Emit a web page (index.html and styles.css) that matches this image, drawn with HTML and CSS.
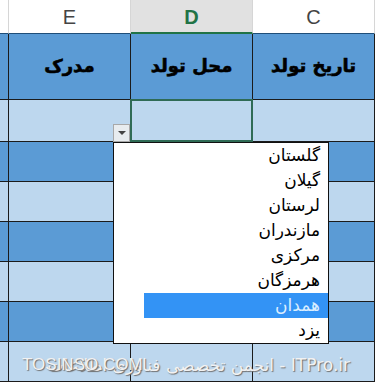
FILE: index.html
```html
<!DOCTYPE html>
<html lang="fa">
<head>
<meta charset="utf-8">
<link rel="stylesheet" href="styles.css">
</head>
<body>
<div class="sheet">
  <div class="row letters">
    <div class="cell"></div>
    <div class="cell">E</div>
    <div class="cell sel-col">D</div>
    <div class="cell">C</div>
  </div>
  <div class="row head">
    <div class="cell"></div>
    <div class="cell" dir="rtl">مدرک</div>
    <div class="cell" dir="rtl">محل تولد</div>
    <div class="cell" dir="rtl">تاریخ تولد</div>
  </div>
  <div class="row light first">
    <div class="cell"></div>
    <div class="cell"></div>
    <div class="cell active"></div>
    <div class="cell"></div>
  </div>
  <div class="row dark"><div class="cell"></div><div class="cell"></div><div class="cell"></div><div class="cell"></div></div>
  <div class="row light"><div class="cell"></div><div class="cell"></div><div class="cell"></div><div class="cell"></div></div>
  <div class="row dark"><div class="cell"></div><div class="cell"></div><div class="cell"></div><div class="cell"></div></div>
  <div class="row light"><div class="cell"></div><div class="cell"></div><div class="cell"></div><div class="cell"></div></div>
  <div class="row dark"><div class="cell"></div><div class="cell"></div><div class="cell"></div><div class="cell"></div></div>
  <div class="row light"><div class="cell"></div><div class="cell"></div><div class="cell"></div><div class="cell"></div></div>

  <div class="arrow-btn"><span class="tri"></span></div>

  <ul class="dropdown" dir="rtl">
    <li>گلستان</li>
    <li>گیلان</li>
    <li>لرستان</li>
    <li>مازندران</li>
    <li>مرکزی</li>
    <li>هرمزگان</li>
    <li class="hl">همدان</li>
    <li>یزد</li>
  </ul>

  <div class="watermark">
    <span class="wm-fa" dir="rtl">ITPro.ir - انجمن تخصصی فناوری اطلاعات</span>
    <span class="wm-en">TOSINSO.COM</span>
  </div>
</div>
</body>
</html>
```

FILE: styles.css
```css
* { box-sizing: border-box; }
html, body { margin: 0; padding: 0; background: #fff; }
body { width: 375px; height: 385px; overflow: hidden; font-family: "DejaVu Sans", sans-serif; }

.sheet { position: relative; width: 375px; height: 385px; overflow: hidden; }

.row {
  display: grid;
  grid-template-columns: 9px 122px 122px 122px;
  height: 40px;
}
.cell {
  border-right: 1px solid #1b1b1b;
  border-bottom: 1px solid #1b1b1b;
  display: flex;
  align-items: center;
  justify-content: center;
}

.letters { height: 34px; background: #fff; }
.letters .cell {
  border-right: 1px solid #d6d6d6;
  border-bottom: 1px solid #1f4e79;
  font-family: "Liberation Sans", sans-serif;
  font-size: 20px;
  color: #444;
  padding-top: 2px;
}
.letters .sel-col {
  background: #e1e1e1;
  color: #217346;
  font-weight: bold;
  border-bottom: 2px solid #217346;
}

.head { height: 66px; background: #5b9bd5; }
.head .cell {
  font-size: 18px;
  font-weight: bold;
  color: #000;
  -webkit-text-stroke: 0.6px #000;
  padding-bottom: 2px;
}

.first { height: 42px; }
.light { background: #bdd7ee; }
.dark { background: #5b9bd5; }

.active {
  border: 2px solid #2f6b55;
  margin-left: -1px;
  margin-top: -1px;
}

.arrow-btn {
  position: absolute;
  left: 113px;
  top: 124px;
  width: 17px;
  height: 18px;
  background: #e8ecef;
  border: 1px solid #a8a8a8;
  display: flex;
  align-items: center;
  justify-content: center;
}
.arrow-btn .tri {
  width: 0; height: 0;
  border-left: 4px solid transparent;
  border-right: 4px solid transparent;
  border-top: 4px solid #444;
}

.dropdown {
  position: absolute;
  left: 113px;
  top: 142px;
  width: 216px;
  height: 202px;
  margin: 0;
  padding: 0;
  list-style: none;
  background: #fff;
  border: 1px solid #111;
}
.dropdown li {
  height: 25px;
  line-height: 25px;
  padding-right: 8px;
  font-family: "DejaVu Sans", sans-serif;
  font-size: 17px;
  color: #000;
  text-align: right;
}
.dropdown li.hl {
  background: #3393f5;
  color: #dbeeff;
  margin-left: 30px;
}

.watermark {
  position: absolute;
  left: 0;
  top: 352px;
  width: 375px;
  height: 26px;
}
.wm-fa, .wm-en {
  position: absolute;
  top: 0;
  font-size: 17px;
  color: #f2f2f2;
  text-shadow: 1px 1px 1px #6f6f6f;
  white-space: nowrap;
  line-height: 26px;
}
.wm-fa { right: 25px; font-family: "DejaVu Sans", sans-serif; }
.wm-en { left: 22px; font-family: "Liberation Sans", sans-serif; }
```
